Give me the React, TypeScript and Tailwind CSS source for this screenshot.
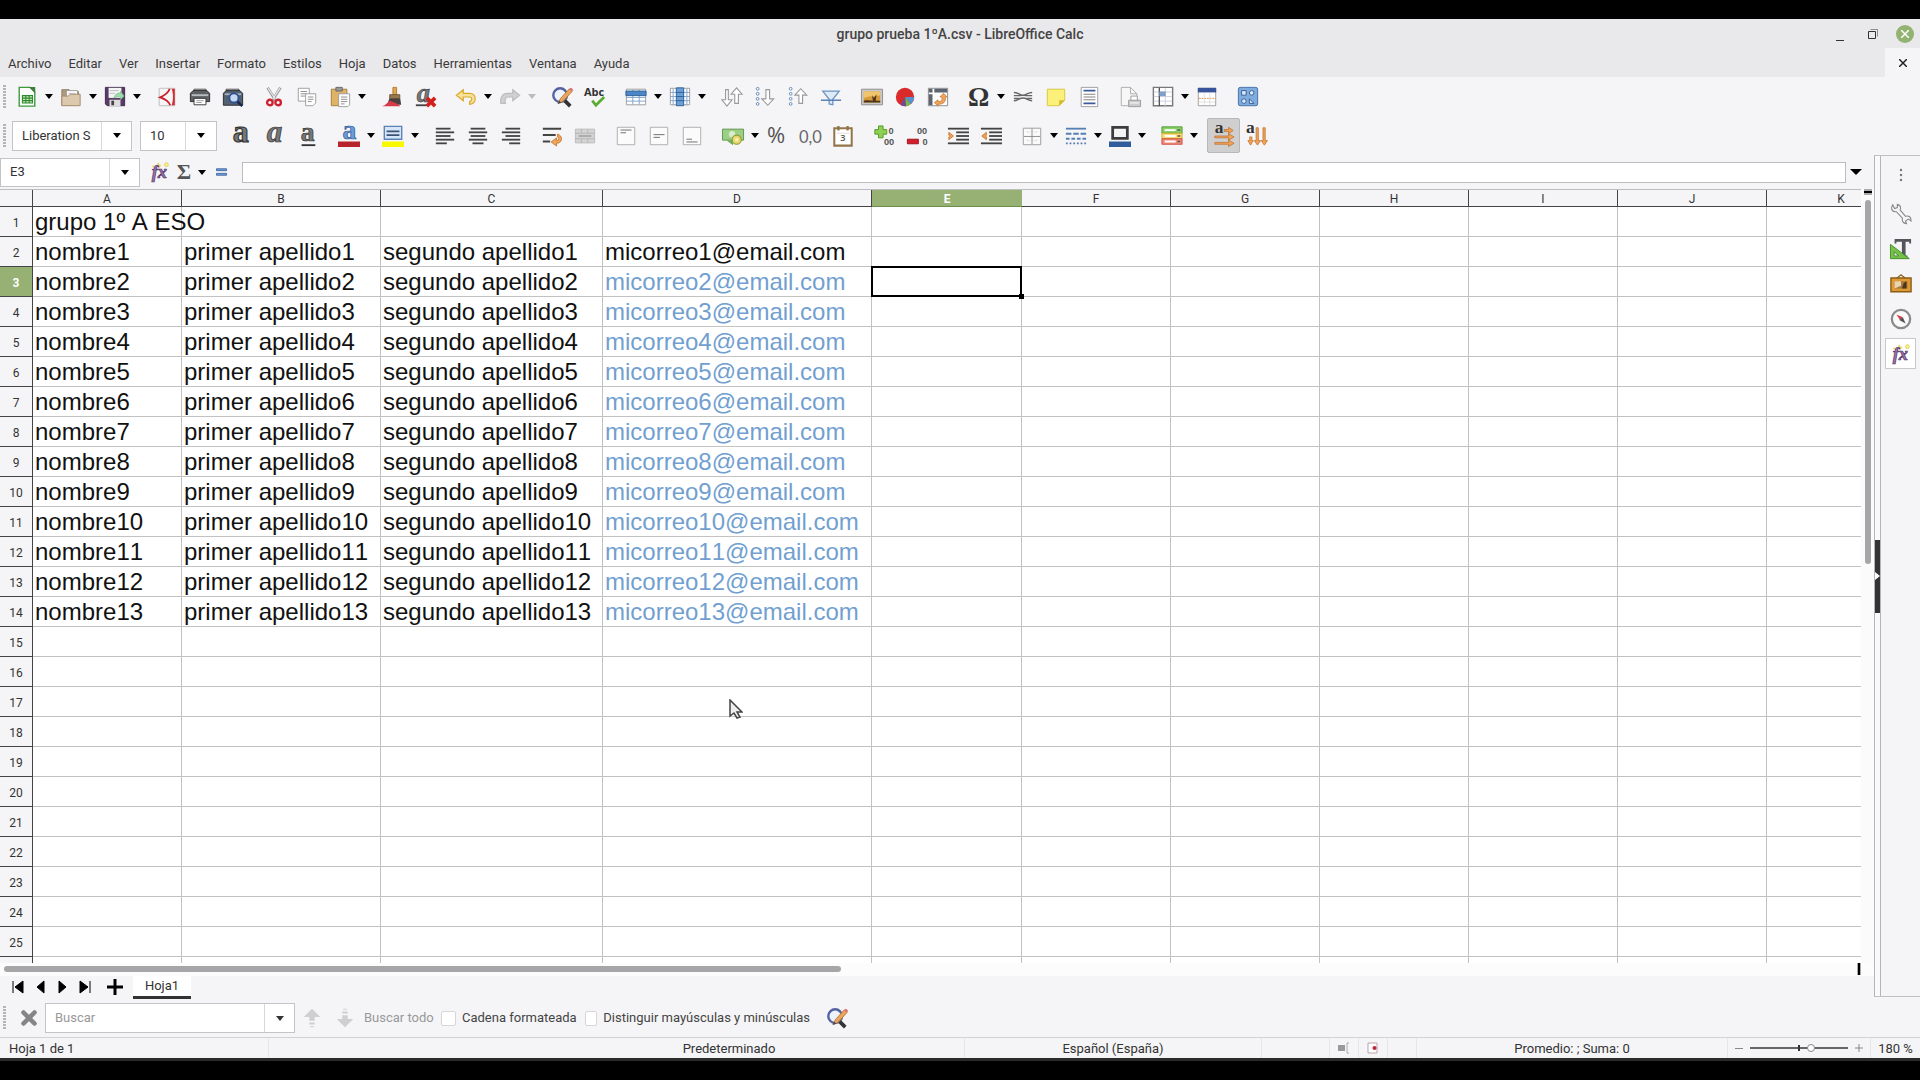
import type { ReactNode } from "react";

const COLUMNS = [
  { id: "A", width: "w-[149px]" },
  { id: "B", width: "w-[199px]" },
  { id: "C", width: "w-[222px]" },
  { id: "D", width: "w-[269px]" },
  { id: "E", width: "w-[150px]" },
  { id: "F", width: "w-[149px]" },
  { id: "G", width: "w-[149px]" },
  { id: "H", width: "w-[149px]" },
  { id: "I", width: "w-[149px]" },
  { id: "J", width: "w-[149px]" },
  { id: "K", width: "w-[149px]" },
];

const ROW_COUNT = 25;

const MENUS = [
  "Archivo", "Editar", "Ver", "Insertar", "Formato", "Estilos",
  "Hoja", "Datos", "Herramientas", "Ventana", "Ayuda",
];

function cellValue(col: string, row: number) {
  if (row === 1) return col === "A" ? "grupo 1º A ESO" : "";
  if (row > 14) return "";
  const n = row - 1;
  switch (col) {
    case "A": return `nombre${n}`;
    case "B": return `primer apellido${n}`;
    case "C": return `segundo apellido${n}`;
    case "D": return `micorreo${n}@email.com`;
    default: return "";
  }
}

const lines = (ys: number[], x1: number, x2: number) =>
  ys.map((y) => <path key={y} d={`M${x1} ${y}H${x2}`} />);

const SERIF = "Liberation Serif, serif";
const SANS = "Open Sans, sans-serif";
const DIGITS = "Liberation Sans, sans-serif";

const ICONS: Record<string, ReactNode> = {
  new: (
    <>
      <path d="M3.5 1.5h12l5 5v15.5h-17z" fill="#fff" stroke="#3c9a3c" strokeWidth="1.5" />
      <path d="M14 1h7v7z" fill="#3f7d3f" />
      <path d="M7 10.5h11v8H7zM7 13.2h11M7 15.9h11M10.7 10.5v8M14.4 10.5v8" fill="#cdeec0" stroke="#2f8a2f" strokeWidth="1.2" />
    </>
  ),
  open: (
    <>
      <path d="M2 4h8l2 2h8v15H2z" fill="#b09a7e" stroke="#8f7b62" />
      <path d="M7 5h12v9H7z" fill="#fff" stroke="#999" />
      <path d="M9 8h8" stroke="#bbb" />
      <path d="M2 11h7l2-2h11v12.5H2z" fill="#dcc8ac" stroke="#a08a6c" />
    </>
  ),
  save: (
    <>
      <path d="M1.5 1.5h21v20h-19l-2-2z" fill="#5a3a66" stroke="#3c2547" />
      <path d="M5 2h14v11H5z" fill="#f4f4f4" />
      <path d="M6 5h10M6 8h6" stroke="#bbb" />
      <path d="M6 15h12v7H6z" fill="#ddd" />
      <path d="M8 16h3v5H8z" fill="#444" />
      <path d="M11 13c1-4 4-6 7-5V6l4 5-4 4v-3c-3-1-5 0-7 1z" fill="#9fdcae" stroke="#69b87c" strokeWidth=".7" />
    </>
  ),
  pdf: (
    <>
      <path d="M3.5 2.5h17v19h-17z" fill="#f8f5f6" stroke="#bbb" />
      <path d="M15 3c-2 5-7 8-10.5 9.5C9 14 14 17 15.5 21" fill="none" stroke="#c8202c" strokeWidth="2" />
      <path d="M17 3h3.5v18H17c2-5 2-13 0-18z" fill="#d12c38" />
    </>
  ),
  print: (
    <>
      <path d="M5.5 3.5h13V9h-13z" fill="#f6f6f6" stroke="#444" />
      <path d="M1.5 8l3-3h15l3 3v9h-21z" fill="#5d6164" stroke="#26292b" />
      <path d="M3 10h18" stroke="#b8bcc0" strokeWidth="2" />
      <path d="M5.500 13.5h13v7h-13z" fill="#fff" stroke="#333" />
      <path d="M8 16h8M8 18h6" stroke="#999" />
    </>
  ),
  preview: (
    <>
      <path d="M4.5 3.5h14V9h-14z" fill="#f0f0f0" stroke="#444" />
      <path d="M1.5 8l3-3h15l3 3v13h-21z" fill="#53606f" stroke="#26292b" />
      <path d="M3 9h18" stroke="#aab2bc" strokeWidth="2" />
      <circle cx="13" cy="13" r="5" fill="#c4d8f0" stroke="#2d4f96" strokeWidth="2" />
      <path d="M17 17l5 5" stroke="#17264e" strokeWidth="2.5" />
    </>
  ),
  cut: (
    <>
      <path d="M5 2l9 14M19 2l-9 14" stroke="#9b9b9b" strokeWidth="3" />
      <path d="M5.5 2.5l8 12M18.5 2.5l-8 12" stroke="#eee" strokeWidth="1.2" />
      <circle cx="7.5" cy="18" r="3" fill="#fff" stroke="#cf2030" strokeWidth="2.6" />
      <circle cx="16.5" cy="18" r="3" fill="#fff" stroke="#cf2030" strokeWidth="2.6" />
    </>
  ),
  copy: (
    <>
      <path d="M2.5 2.5h12v14h-12z" fill="#fff" stroke="#999" />
      <path d="M5 6h7M5 8.5h7M5 11h5" stroke="#888" />
      <path d="M10.5 8.5h11v10l-3 3h-8z" fill="#fff" stroke="#999" />
      <path d="M13 12h6M13 14.5h6M13 17h4" stroke="#888" />
    </>
  ),
  paste: (
    <>
      <path d="M2.5 3.5h17v18h-17z" fill="#e0b265" stroke="#a47b38" />
      <path d="M7.5 1.5h7v4h-7z" fill="#999" stroke="#666" />
      <path d="M10.5 8.5h12v12l-2 2h-10z" fill="#fff" stroke="#999" />
      <path d="M13 12h7M13 14.5h7M13 17h7M13 19.5h4" stroke="#888" />
    </>
  ),
  brush: (
    <>
      <path d="M13 1.5h4v8h-4z" fill="#e3a54e" stroke="#b47a29" />
      <path d="M9.5 9.5h11v4h-11z" fill="#9a7a50" stroke="#6b5130" />
      <path d="M9 13.5h12l1 7H7z" fill="#4a4040" />
      <path d="M1 22c5-1 6-5 9-6 3 2 8 2 11 6z" fill="#d8394a" />
    </>
  ),
  clear: (
    <>
      <text x="3" y="17" fontFamily={SERIF} fontWeight="700" fontStyle="italic" fontSize="29" fill="#777" stroke="#333" strokeWidth=".6">a</text>
      <path d="M2 21h12" stroke="#444" strokeWidth="2" />
      <path d="M14 13l9 9M23 13l-9 9" stroke="#d41f1f" strokeWidth="4" />
    </>
  ),
  undo: <path d="M9 4L1.5 10 9 16v-4h7c3 0 3 4 0 5v3c8-1 8-12 0-12H9z" fill="#f8e29a" stroke="#d9a92c" strokeWidth="1.3" />,
  redo: <path d="M15 4l7.500 6L15 16v-4h-5c-3 0-4 3-3 7H2C1 12 4 8 9 8h6z" fill="#d0d0d0" stroke="#bdbdbd" strokeWidth="1.3" />,
  find: (
    <>
      <circle cx="10" cy="10" r="7.5" fill="#eef2fb" stroke="#5362a0" strokeWidth="2.6" />
      <path d="M15 16l6 6" stroke="#333" strokeWidth="4" />
      <path d="M8 19l2-5L20 3l3 3-10 11z" fill="#eaa35a" stroke="#b06f2c" strokeWidth=".8" />
      <path d="M20 3l3 3 1-2-2-2z" fill="#e06070" />
      <path d="M7 20l2-4 2 2z" fill="#444" />
    </>
  ),
  spell: (
    <>
      <text x="0" y="11" fontFamily={SANS} fontWeight="700" fontSize="12" fill="#333">Abc</text>
      <path d="M9 16l4 5 9-9" fill="none" stroke="#5cab33" strokeWidth="3" />
    </>
  ),
  rows: (
    <>
      <path d="M1.5 3.5h21v17h-21z" fill="#fff" stroke="#999" />
      <path d="M1.5 16.5h21M1.5 12.5h21M8.5 4v16M15.5 4v16" stroke="#7da2cc" />
      <path d="M1 5.5h22v5H1z" fill="#4b87c8" stroke="#2d5c93" />
    </>
  ),
  cols: (
    <>
      <path d="M1.5 2.5h21v18h-21z" fill="#fff" stroke="#999" />
      <path d="M1.5 7h21M1.5 11.5h21M1.5 16h21M4.5 3v18M19.5 3v18" stroke="#7da2cc" />
      <path d="M8 2h8v19.500H8z" fill="#6a9fd8" stroke="#2d5c93" />
      <path d="M8 7h8M8 11.500h8M8 16h8" stroke="#2d5c93" />
    </>
  ),
  sort: (
    <g fill="#fff" stroke="#999" strokeWidth="1.2">
      <path d="M5 4h3v11h4l-5.500 7L1 15h4z" />
      <path d="M15 19h4V9h4l-6-7-6 7h4z" />
    </g>
  ),
  sortAsc: (
    <>
      <g fill="#fff" stroke="#5d83b5">
        {[3, 8.5, 14, 19.5].map((y) => <circle key={y} cx="4" cy={y} r="1.5" />)}
      </g>
      <path d="M13 4h4v10h4.500l-6.500 7-6.500-7H13z" fill="#fff" stroke="#999" strokeWidth="1.2" />
    </>
  ),
  sortDesc: (
    <>
      <g fill="#fff" stroke="#5d83b5">
        {[3, 8.5, 14, 19.5].map((y) => <circle key={y} cx="4" cy={y} r="1.5" />)}
      </g>
      <path d="M13 19h4V10h4.500L15 3l-6.500 7H13z" fill="#fff" stroke="#999" strokeWidth="1.2" />
    </>
  ),
  filter: (
    <>
      <path d="M3 5.5h18l-7 9v6l-4-1v-5z" fill="#dce9f7" stroke="#6d93c1" strokeWidth="1.4" />
      <path d="M1 15.500h22" stroke="#4b78ad" strokeWidth="1.5" />
    </>
  ),
  image: (
    <>
      <path d="M.5 3.5h23v17H.5z" fill="#c9c9c9" stroke="#8a8a8a" />
      <path d="M3 6h18v12H3z" fill="#d79a3c" />
      <path d="M3 6h18v4c-6 2-12 0-18 3z" fill="#f0c66c" />
      <path d="M3 18v-2c4-1 6 0 10 0l-1-6 2 3 3-4-1 7 5 0v2z" fill="#4d351a" />
    </>
  ),
  chart: (
    <>
      <circle cx="12" cy="12" r="10" fill="#da2b2b" />
      <path d="M12 12h10a10 10 0 0 1-4 8z" fill="#5c8fd0" />
      <path d="M12 12l6 8a10 10 0 0 1-5 2z" fill="#6fbf4a" />
      <path d="M12 12l1 10a10 10 0 0 1-6-1.500z" fill="#704a9a" />
    </>
  ),
  pivot: (
    <>
      <path d="M1.5 2.5h21v19h-21z" fill="#fff" stroke="#888" />
      <path d="M2 3h4v4H2zM8 3h14v4H8zM2 9h4v12H2z" fill="#5d6470" />
      <path d="M8 18l4-3v2c4 0 5-2 4-5h-2l4-4 4 4h-2c1 5-2 8-8 8v2z" fill="#f0a35c" stroke="#bd6a1f" strokeWidth=".7" />
    </>
  ),
  omega: <text x="0" y="22" fontFamily={SERIF} fontWeight="700" fontSize="29" fill="#333">Ω</text>,
  link: (
    <g fill="none" stroke="#666" strokeWidth="1.6">
      <path d="M2 7c5 0 6 3 10 3s5-3 10-3M2 16c5 0 6-3 10-3s5 3 10 3M2 10.5h8M14 10.5h8M2 13.5h6M16 13.5h6" />
    </g>
  ),
  note: (
    <>
      <path d="M2.5 3.5h19v12l-6 6h-13z" fill="#fbf07a" stroke="#d8c53a" />
      <path d="M21.5 15.5h-6v6z" fill="#d5b92a" />
    </>
  ),
  header: (
    <>
      <path d="M3.5 1.5h18v21h-18z" fill="#fff" stroke="#999" />
      <path d="M6 5h13M6 19h13" stroke="#3c5a9a" strokeWidth="2" />
      <path d="M6 9h13M6 12h13M6 15h13" stroke="#777" />
    </>
  ),
  printArea: (
    <>
      <path d="M2.5 1.5h10l7 7v13h-17z" fill="#f7f7f7" stroke="#aaa" />
      <path d="M12.5 1.5v7h7" fill="none" stroke="#aaa" />
      <path d="M13 11h7v5h-7z" fill="#fff" stroke="#999" />
      <path d="M10.500 15.500h13v7h-13z" fill="#ccc" stroke="#999" />
      <path d="M12 18.5h10" stroke="#fff" />
    </>
  ),
  freeze: (
    <>
      <path d="M1.5 1.5h21v20h-21z" fill="#fff" stroke="#777" strokeWidth="1.5" />
      <path d="M2 6.5h20M2 11.5h20M2 16.5h20M14.5 2v20" stroke="#ccd" />
      <path d="M8 2v20" stroke="#555" strokeWidth="1.5" />
      <path d="M8 6h7v5H8z" fill="#7fa0c8" />
    </>
  ),
  windowSplit: (
    <>
      <path d="M2.5 2.5h19v19h-19z" fill="#fff" stroke="#999" />
      <path d="M2 2h20v5H2z" fill="#39539a" />
      <path d="M3 13.5h18" stroke="#e08b3c" strokeDasharray="2 1" />
      <path d="M9 8v13M15 8v13M3 17.5h18" stroke="#ddd" />
    </>
  ),
  draw: (
    <>
      <rect x="1.5" y="1.5" width="21" height="20" rx="2" fill="#7fabdd" stroke="#3f6ca5" />
      <g fill="#dceafa" stroke="#2f5b96">
        <path d="M5 5h5v5H5zM13.5 19v-5l5 5z" />
        <circle cx="16" cy="7.5" r="2.5" />
        <circle cx="7.5" cy="16.5" r="2.5" />
      </g>
    </>
  ),
  bold: <text x="2" y="19" fontFamily={SERIF} fontWeight="700" fontSize="35" fill="#777" stroke="#333" strokeWidth="1.2">a</text>,
  italic: <text x="3" y="19" fontFamily={SERIF} fontWeight="700" fontStyle="italic" fontSize="34" fill="#777" stroke="#333" strokeWidth=".8">a</text>,
  underline: (
    <>
      <text x="4" y="17" fontFamily={SERIF} fontWeight="700" fontSize="30" fill="#777" stroke="#333" strokeWidth=".8">a</text>
      <path d="M5 22h15" stroke="#333" strokeWidth="2" />
    </>
  ),
  fontColor: (
    <>
      <text x="5" y="15" fontFamily={SERIF} fontWeight="700" fontSize="30" fill="#6c9bd8" stroke="#2f5b96" strokeWidth=".8">a</text>
      <path d="M0 18h24v6H0z" fill="#b8242c" />
    </>
  ),
  highlight: (
    <>
      <path d="M2.5 1.500h19v14h-19z" fill="#d6e5f7" stroke="#5c82b3" strokeWidth="1.5" />
      <path d="M5 7h14M5 11h14" stroke="#3b5275" strokeWidth="2" />
      <path d="M0 18h24v6H0z" fill="#f8f800" />
    </>
  ),
  alignLeft: <g stroke="#444" strokeWidth="2">{lines([4, 12], 2, 18)}{lines([8, 16], 2, 22)}{lines([20], 2, 14)}</g>,
  alignCenter: <g stroke="#444" strokeWidth="2">{lines([4, 12], 4, 20)}{lines([8, 16], 2, 22)}{lines([20], 6, 18)}</g>,
  alignRight: <g stroke="#444" strokeWidth="2">{lines([4, 12], 6, 22)}{lines([8, 16], 2, 22)}{lines([20], 10, 22)}</g>,
  wrap: (
    <>
      <path d="M2 4h20M2 11h14M2 18h8" stroke="#444" strokeWidth="2.200" />
      <path d="M18 10c6 1 6 10-1 10v3l-6-4.500 6-4.500v3c3 0 3-4 1-4z" fill="#eda45b" stroke="#bd6a1f" strokeWidth=".8" />
    </>
  ),
  merge: (
    <>
      <path d="M1.5 4.5h21v15h-21z" fill="#d4d4d4" stroke="#bbb" />
      <path d="M1.5 9h21M1.5 15h21M8 15v4.5M15 15v4.5M8 4.5V9M15 4.5V9" stroke="#b4b4b4" />
      <path d="M5 12h14" stroke="#999" strokeWidth="1.5" />
    </>
  ),
  top: (
    <>
      <path d="M2.5 2.5h19v19h-19z" fill="#fbfbfb" stroke="#aaa" />
      <path d="M6 5.5h12M6 8.5h6" stroke="#666" />
    </>
  ),
  middle: (
    <>
      <path d="M2.5 2.5h19v19h-19z" fill="#fbfbfb" stroke="#aaa" />
      <path d="M6 10.5h12M6 13.5h7" stroke="#666" />
    </>
  ),
  bottom: (
    <>
      <path d="M2.5 2.5h19v19h-19z" fill="#fbfbfb" stroke="#aaa" />
      <path d="M6 15.5h6M6 18.5h12" stroke="#666" />
    </>
  ),
  currency: (
    <>
      <path d="M.5 4.5h23v12H.5z" fill="#9ccf86" stroke="#5c9444" />
      <circle cx="11" cy="10" r="3.5" fill="#d5edc8" />
      <circle cx="16" cy="16" r="5" fill="#e8d56b" stroke="#8c9b39" strokeWidth="1.2" />
      <circle cx="16" cy="16" r="2" fill="#f8efb0" />
      <path d="M5 17l7 5v-5z" fill="#6fae52" />
    </>
  ),
  percent: <text x="1" y="20" fontFamily={SANS} fontSize="24" fill="#555">%</text>,
  number: <text x="0" y="20" fontFamily="Lato, sans-serif" fontSize="18" fill="#666">0,0</text>,
  date: (
    <>
      <path d="M2.5 3.5h19v19h-19z" fill="#fff" stroke="#93754a" strokeWidth="2.2" />
      <path d="M7 1v5M17 1v5" stroke="#93754a" strokeWidth="2.5" />
      <path d="M5 9h14" stroke="#ddd" />
      <text x="9" y="17" fontFamily={SANS} fontSize="10" fontWeight="600" fill="#555">3</text>
    </>
  ),
  addDecimal: (
    <>
      <path d="M6 1h5v4h4v5h-4v4H6v-4H2V5h4z" fill="#8fd052" stroke="#4c9a20" />
      <text x="17" y="10" fontFamily={DIGITS} fontSize="10" fontWeight="700" fill="#555">0</text>
      <text x="12" y="22" fontFamily={DIGITS} fontSize="10" fontWeight="700" fill="#555">00</text>
    </>
  ),
  delDecimal: (
    <>
      <path d="M1.5 15.5h12v5h-12z" fill="#d4202c" stroke="#9c1019" />
      <text x="12" y="10" fontFamily={DIGITS} fontSize="10" fontWeight="700" fill="#555">00</text>
      <text x="18" y="22" fontFamily={DIGITS} fontSize="10" fontWeight="700" fill="#555">0</text>
    </>
  ),
  indent: (
    <>
      <g stroke="#444" strokeWidth="2">{lines([4, 20], 1, 24)}{lines([8, 12, 16], 10, 24)}</g>
      <path d="M2 8l5 4-5 4v-3l1-1-1-1z" fill="#f0a05a" stroke="#d07a2c" />
    </>
  ),
  outdent: (
    <>
      <g stroke="#444" strokeWidth="2">{lines([4, 20], 1, 24)}{lines([8, 12, 16], 10, 24)}</g>
      <path d="M7 8l-5 4 5 4v-3l-1-1 1-1z" fill="#f0a05a" stroke="#d07a2c" />
    </>
  ),
  borders: (
    <>
      <path d="M2.5 3.5h19v18h-19z" fill="#fafafa" stroke="#999" />
      <path d="M12 4v17M3 12.5h18" stroke="#888" />
      <path d="M6 7.5h4M14 7.5h4M6 17h4M14 17h4" stroke="#ddd" />
    </>
  ),
  lineStyle: (
    <g stroke="#5680b5" strokeWidth="2">
      <path d="M1 4h22" />
      <path d="M1 9.5h22" strokeDasharray="6 2" />
      <path d="M1 15h22" strokeDasharray="4 2" />
      <path d="M1 20h22" strokeDasharray="2 2" />
    </g>
  ),
  borderColor: (
    <>
      <path d="M4 2.5h16v12H4z" fill="#f4f4f4" stroke="#3c3c3c" strokeWidth="3" />
      <path d="M0 18h24v6H0z" fill="#2f5d9c" />
    </>
  ),
  conditional: (
    <>
      <path d="M1 2h22v7H1z" fill="#8bd06a" stroke="#4c9a2c" />
      <path d="M1 9h22v6H1z" fill="#f6dd72" stroke="#cfae2e" />
      <path d="M1 15h22v6H1z" fill="#f08c7c" stroke="#d14a3c" />
      <path d="M4 5.5h12M4 12h12M4 18h12" stroke="#fff" strokeWidth="2" />
      <path d="M18 5.5h3M18 12h3M18 18h3" stroke="#555" strokeWidth="1.5" />
    </>
  ),
  ltr: (
    <>
      <text x="2" y="9" fontFamily={SERIF} fontWeight="700" fontSize="19" fill="#333">a</text>
      <g fill="#f0a35c" stroke="#b9651b" strokeWidth=".7">
        <path d="M12 5h5V2.500l5 3.500-5 3.500V7h-5zM2 12h15V9.500l6 3.500-6 3.500V14H2zM2 19h15v-2.500l6 3.500-6 3.500V21H2z" />
      </g>
    </>
  ),
  ttb: (
    <>
      <text x="0" y="9" fontFamily={SERIF} fontWeight="700" fontSize="19" fill="#333">a</text>
      <g fill="#f0a35c" stroke="#b9651b" strokeWidth=".7">
        <path d="M4 13h2.500v4H8l-3 5-3-5h2zM11 3h2.500v14H16l-3.500 5L9 17h2zM18.500 3H21v14h2.500L20 22l-3.500-5h2z" />
      </g>
    </>
  ),
  fx: (
    <>
      <text x="3" y="19" fontFamily={SERIF} fontWeight="700" fontStyle="italic" fontSize="20" fill="#9a76ab" stroke="#57356b" strokeWidth=".8">fx</text>
      <path d="M4 5l1 2M10 2v2" stroke="#e7d64f" strokeWidth="1.5" />
      <circle cx="19" cy="4" r="2" fill="#fbf3a0" stroke="#e0cc3c" />
      <circle cx="12" cy="5" r="1.3" fill="#f2df55" />
    </>
  ),
  sigma: <text x="4" y="20" fontFamily={SERIF} fontWeight="700" fontSize="24" fill="#555">Σ</text>,
  equals: <path d="M6 8.5h11v2H6zM6 13.5h11v2H6z" fill="#7ba4d8" stroke="#3c67a5" />,
  wrench: <path d="M3 2l2 4 3-1V1.500c4 1 4 4 3 6l6 7c3-1 6 0 6 5l-3-2-3 2 1 3c-4 0-5-3-4.500-6L7 9.500C3 10 0 7 3 2z" fill="#f4f4f4" stroke="#888" strokeWidth="1.2" />,
  styles: (
    <>
      <path d="M5 1h18v5h-2V4h-4v15h2v2h-8v-2h2V4H7v2H5z" fill="#54565c" />
      <path d="M.5 7v15.500H21z" fill="#77c04c" stroke="#3f8a22" />
      <path d="M4.500 15v4.500h5z" fill="#f4f4f4" stroke="#3f8a22" />
    </>
  ),
  gallery: (
    <>
      <path d="M7 6l5-4 5 4" fill="none" stroke="#8a6424" strokeWidth="1.5" />
      <path d="M1 5.500h22v15H1z" fill="#e09a34" stroke="#8a5c14" strokeWidth="1.5" />
      <path d="M5 9h14v8H5z" fill="#a8793c" />
      <path d="M5 9h7v5l-7 3z" fill="#e8d6b0" />
      <path d="M13 17l2-6 3-2v8z" fill="#4d351a" />
    </>
  ),
  compass: (
    <>
      <circle cx="12" cy="12" r="10" fill="#fafafa" stroke="#8a8a8a" strokeWidth="2.5" />
      <path d="M7 7l7 3-3 3z" fill="#d63d4a" />
      <path d="M17 17l-7-4 4-3z" fill="#555" />
    </>
  ),
  closeFind: <path d="M6 6l12 12M18 6L6 18" stroke="#858585" strokeWidth="5" strokeLinecap="round" />,
  findUp: <path d="M12 2l9 9h-6v4h-6v-4H3zM9 17h6v2H9zM10 21h4v1h-4z" fill="#cfcfcf" />,
  findDown: <path d="M12 22l9-9h-6V9H9v4H3zM9 5h6v2H9zM10 2h4v1h-4z" fill="#cfcfcf" />,
};

function Icon({ name }: { name: string }) {
  return (
    <svg viewBox="0 0 24 24" className="size-[22px] shrink-0 overflow-visible" fill="none" aria-hidden="true">
      {ICONS[name]}
    </svg>
  );
}

function Caret({ className = "text-black" }: { className?: string }) {
  return (
    <svg viewBox="0 0 8 5" className={`h-[5px] w-2 shrink-0 ${className}`} aria-hidden="true">
      <path d="M0 0h8L4 5z" fill="currentColor" />
    </svg>
  );
}

// "name" is a plain button, "name+" has a drop-down arrow, "|" is a group gap
const STANDARD = [
  "new+", "open+", "save+", "|", "pdf", "print", "preview", "|", "cut", "copy", "paste+", "|",
  "brush", "clear", "|", "undo+", "redo+", "|", "find", "spell", "|", "rows+", "cols+", "|",
  "sort", "sortAsc", "sortDesc", "filter", "|", "image", "chart", "pivot", "|", "omega+", "link",
  "note", "header", "|", "printArea", "freeze+", "windowSplit", "|", "draw",
];

const FORMATTING = [
  "bold", "italic", "underline", "|", "fontColor+", "highlight+", "|", "alignLeft", "alignCenter",
  "alignRight", "|", "wrap", "merge", "|", "top", "middle", "bottom", "|", "currency+", "percent",
  "number", "date", "|", "addDecimal", "delDecimal", "|", "indent", "outdent", "|", "borders+",
  "lineStyle+", "borderColor+", "|", "conditional+", "|", "ltr", "ttb",
];

function ToolItems({ items }: { items: string[] }) {
  return (
    <>
      {items.map((item, i) => {
        if (item === "|") return <span key={i} className="w-2 shrink-0" />;
        const name = item.replace("+", "");
        return (
          <span key={i} className="flex shrink-0 items-center">
            <button
              type="button"
              aria-label={name}
              className={`flex h-[35px] w-[33px] items-center justify-center rounded-xs ${name === "ltr" ? "border border-[#b8b8b8] bg-[#cfcfcf]" : ""}`}
            >
              <Icon name={name} />
            </button>
            {item.endsWith("+") && (
              <button type="button" aria-label={`${name} opciones`} className="flex h-[35px] w-[11px] items-center justify-center">
                <Caret className={name === "redo" ? "text-[#bbb]" : "text-black"} />
              </button>
            )}
          </span>
        );
      })}
    </>
  );
}

function Grip() {
  return <span className="ml-[3px] h-6 w-[3px] shrink-0 bg-[repeating-linear-gradient(#b5b5b5_0_2px,transparent_2px_3px)]" />;
}

function TitleBar() {
  return (
    <header className="grid h-[29px] grid-cols-[1fr_auto_1fr] items-center bg-[#e9e8ea]">
      <h1 className="col-start-2 pt-0.5 text-[14px] font-medium text-[#444]">grupo prueba 1ºA.csv - LibreOffice Calc</h1>
      <div className="flex items-center justify-end gap-[13px] pr-[6px]">
        <button type="button" aria-label="Minimizar" className="flex size-5 items-end justify-center pb-[3px]">
          <span className="h-px w-2 bg-[#333]" />
        </button>
        <button type="button" aria-label="Restaurar" className="flex size-5 items-center justify-center">
          <svg viewBox="0 0 12 12" className="size-3" fill="none" stroke="#333">
            <path d="M1.5 3.5h7v7h-7z" />
            <path d="M3.5 1.5h7v7" strokeOpacity=".5" />
          </svg>
        </button>
        <button type="button" aria-label="Cerrar" className="flex size-[18px] items-center justify-center rounded-full bg-[#92b372]">
          <svg viewBox="0 0 8 8" className="size-2" stroke="#fff" strokeWidth="1.5">
            <path d="M0 0l8 8M8 0L0 8" />
          </svg>
        </button>
      </div>
    </header>
  );
}

function MenuBar() {
  return (
    <nav className="flex h-[29px] items-stretch gap-px bg-[#e9e8ea] text-[13px] text-[#3a3a3a]">
      {MENUS.map((menu) => (
        <button key={menu} type="button" className="px-2 pt-0.5">{menu}</button>
      ))}
      <button type="button" aria-label="Cerrar documento" className="ml-auto flex w-[35px] items-center justify-center bg-[#f5f5f7]">
        <svg viewBox="0 0 8 8" className="size-2" stroke="#222" strokeWidth="1.5">
          <path d="M0 0l8 8M8 0L0 8" />
        </svg>
      </button>
    </nav>
  );
}

function Toolbars() {
  return (
    <div className="bg-[#f5f5f7]">
      <div className="flex h-[39px] items-center">
        <Grip />
        <span className="w-1 shrink-0" />
        <ToolItems items={STANDARD} />
      </div>
      <div className="flex h-[39px] items-center">
        <Grip />
        <div className="ml-[6px] flex h-[30px] w-[120px] shrink-0 border border-[#c4c4c6] bg-white">
          <select aria-label="Nombre del tipo de letra" className="w-[88px] appearance-none pl-[9px] text-[13px] text-[#333]">
            <option>Liberation S</option>
          </select>
          <span className="flex flex-1 items-center justify-center border-l border-[#d8d8da]"><Caret /></span>
        </div>
        <div className="ml-2 flex h-[30px] w-[77px] shrink-0 border border-[#c4c4c6] bg-white">
          <select aria-label="Tamaño de letra" className="w-11 appearance-none pl-[9px] text-[13px] text-[#333]">
            <option>10</option>
          </select>
          <span className="flex flex-1 items-center justify-center border-l border-[#d8d8da]"><Caret /></span>
        </div>
        <span className="w-2 shrink-0" />
        <ToolItems items={FORMATTING} />
      </div>
    </div>
  );
}

function FormulaBar() {
  return (
    <div className="flex h-[34px] items-center bg-[#f5f5f7]">
      <div className="flex h-[29px] w-[140px] shrink-0 border border-[#c4c4c6] bg-white">
        <input aria-label="Cuadro de nombre" defaultValue="E3" className="w-[108px] pl-[9px] text-[13px] text-[#333]" />
        <button type="button" aria-label="Lista de nombres" className="flex flex-1 items-center justify-center border-l border-[#d8d8da]"><Caret /></button>
      </div>
      <button type="button" aria-label="Asistente de funciones" className="ml-2 flex w-6 justify-center"><Icon name="fx" /></button>
      <button type="button" aria-label="Seleccionar función" className="flex w-6 justify-center"><Icon name="sigma" /></button>
      <button type="button" aria-label="Funciones" className="flex w-3 justify-center"><Caret /></button>
      <button type="button" aria-label="Fórmula" className="flex w-7 justify-center"><Icon name="equals" /></button>
      <input aria-label="Línea de entrada" className="ml-[6px] h-[21px] min-w-0 flex-1 border border-[#bdbdbf] bg-white px-1 text-[13px]" />
      <button type="button" aria-label="Expandir barra de fórmulas" className="flex w-7 justify-center pr-2">
        <svg viewBox="0 0 12 6" className="h-[6px] w-3 shrink-0"><path d="M0 0h12L6 6z" /></svg>
      </button>
    </div>
  );
}

function Sheet() {
  const rows = Array.from({ length: ROW_COUNT }, (_, i) => i + 1);
  return (
    <div className="flex bg-white">
      <div className="min-w-0 flex-1 overflow-hidden border-t border-[#bdbdbf]">
        <table className="w-[1882px] table-fixed border-separate border-spacing-0">
          <thead>
            <tr className="h-[17px] text-[12px] leading-[14px] text-[#333]">
              <th aria-label="Seleccionar todo" className="w-[33px] border-r border-b border-[#444] bg-[#f5f5f7] p-0" />
              {COLUMNS.map(({ id, width }) => (
                <th
                  key={id}
                  scope="col"
                  className={`border-b p-0 pt-0.5 ${width} ${id === "E" ? "border-[#6d8f4a] bg-[#96b173] font-bold text-white" : "border-r border-[#444] bg-[#f5f5f7] font-normal"}`}
                >
                  {id}
                </th>
              ))}
            </tr>
          </thead>
          <tbody>
            {rows.map((row) => (
              <tr key={row} className="h-[30px]">
                <th
                  scope="row"
                  className={`border-r border-b border-[#444] p-0 pt-0.5 text-[12px] leading-4 ${row === 3 ? "bg-[#96b173] font-bold text-white" : "bg-[#f5f5f7] font-normal text-[#333]"}`}
                >
                  {row}
                </th>
                {COLUMNS.map(({ id }) => (
                  <td
                    key={id}
                    className={`relative border-r border-b border-[#c2c2c2] p-0 pl-[2px] font-['Liberation_Sans',Arial,sans-serif] text-[24px] leading-[29px] whitespace-nowrap [font-kerning:none] ${id === "D" && row > 2 ? "text-[#729fcf]" : "text-[#111]"}`}
                  >
                    {cellValue(id, row)}
                    {id === "E" && row === 3 && (
                      <span className="absolute -inset-px z-10 border-2 border-black">
                        <span className="absolute -right-1 -bottom-1 size-[5px] bg-black" />
                      </span>
                    )}
                  </td>
                ))}
              </tr>
            ))}
            <tr className="h-[6px]">
              <th aria-label="26" className="border-r border-[#444] bg-[#f5f5f7] p-0" />
              {COLUMNS.map(({ id }) => <td key={id} className="border-r border-[#c2c2c2] p-0" />)}
            </tr>
          </tbody>
        </table>
      </div>
      <div className="flex w-[13px] shrink-0 flex-col items-center bg-[#fbfbfc]">
        <span className="h-[6px] w-2 border-y-2 border-[#aaa] bg-black" />
        <span className="mt-[5px] h-[364px] w-[6px] rounded-full bg-[#a6a6a8]" />
      </div>
    </div>
  );
}

function SheetTabs() {
  return (
    <div>
      <div className="flex h-[13px] items-center bg-[#fcfcfd] pb-px pl-1">
        <span className="h-[6px] w-[837px] rounded-full bg-[#a6a6a8]" />
        <span className="mr-[13px] ml-auto h-3 w-1 border-x border-[#aaa] bg-black" />
      </div>
      <div className="flex h-[25px] items-start bg-[#f5f5f7]">
        <div className="flex h-[23px] items-center pb-px pl-[7px]">
          {[
            ["Primera hoja", "M2 1v12M12 1v12L4 7z"],
            ["Hoja anterior", "M11 1v12L4 7z"],
            ["Hoja siguiente", "M4 1v12l7-6z"],
            ["Última hoja", "M3 1v12l8-6zM13 1v12"],
          ].map(([label, d]) => (
            <button key={label} type="button" aria-label={label} className="flex w-[22px] justify-center">
              <svg viewBox="0 0 14 14" className="size-[14px]" stroke="#000" strokeWidth="1"><path d={d} /></svg>
            </button>
          ))}
          <button type="button" aria-label="Añadir hoja" className="ml-[9px] flex w-[22px] justify-center">
            <svg viewBox="0 0 16 16" className="size-4" stroke="#000" strokeWidth="3"><path d="M8 0v16M0 8h16" /></svg>
          </button>
        </div>
        <button type="button" className="ml-[7px] h-[23px] w-[58px] border-b-3 border-[#333] bg-white text-[13px] leading-5 text-[#333]">Hoja1</button>
      </div>
    </div>
  );
}

function Sidebar() {
  return (
    <aside className="mb-1 flex w-[46px] shrink-0 border-y border-[#c0c0c2]">
      <div className="flex w-[7px] items-center border-x border-[#b5b5b7] bg-[#f9f9fa]">
        <button type="button" aria-label="Ocultar barra lateral" className="flex h-[73px] w-full items-center justify-center bg-[#333]">
          <svg viewBox="0 0 5 8" className="h-2 w-[5px] shrink-0" fill="#fff"><path d="M0 0l5 4-5 4z" /></svg>
        </button>
      </div>
      <div className="flex flex-1 flex-col items-center bg-[#f5f5f7] pt-[7px]">
        <button type="button" aria-label="Configuración de la barra lateral" className="mb-[11px] flex h-6 w-[30px] items-center justify-center">
          <svg viewBox="0 0 4 14" className="h-[14px] w-1" fill="#777">
            <circle cx="2" cy="2" r="1.2" /><circle cx="2" cy="7" r="1.2" /><circle cx="2" cy="12" r="1.2" />
          </svg>
        </button>
        {["wrench", "styles", "gallery", "compass", "fx"].map((name) => (
          <button
            key={name}
            type="button"
            aria-label={name}
            className={`mb-1 flex h-[31px] w-[31px] items-center justify-center ${name === "fx" ? "border border-[#c9c9cb] bg-white" : ""}`}
          >
            <Icon name={name} />
          </button>
        ))}
      </div>
    </aside>
  );
}

function FindBar() {
  return (
    <div className="flex h-9 items-center bg-[#f5f5f7] pb-0.5 text-[13px] text-[#444]">
      <Grip />
      <button type="button" aria-label="Cerrar búsqueda" className="ml-3 flex w-[22px] justify-center"><Icon name="closeFind" /></button>
      <div className="ml-[5px] flex h-[30px] w-[250px] border border-[#c4c4c6] bg-white">
        <input aria-label="Buscar" placeholder="Buscar" className="w-[218px] pl-[9px] placeholder:text-[#999]" />
        <button type="button" aria-label="Historial de búsqueda" className="flex flex-1 items-center justify-center border-l border-[#d8d8da]"><Caret className="text-[#333]" /></button>
      </div>
      <button type="button" aria-label="Buscar anterior" className="ml-[6px] flex w-[22px] justify-center"><Icon name="findUp" /></button>
      <button type="button" aria-label="Buscar siguiente" className="ml-[11px] flex w-[22px] justify-center"><Icon name="findDown" /></button>
      <button type="button" className="ml-2 w-[68px] text-left whitespace-nowrap text-[#999]">Buscar todo</button>
      <label className="ml-[9px] flex w-[137px] items-center gap-[6px] whitespace-nowrap">
        <input type="checkbox" className="size-[15px] appearance-none rounded-xs border border-[#d6d6d8] bg-white" />
        Cadena formateada
      </label>
      <label className="ml-[7px] flex w-[225px] items-center gap-[6px] whitespace-nowrap">
        <input type="checkbox" className="size-[15px] appearance-none rounded-xs border border-[#d6d6d8] bg-white" />
        Distinguir mayúsculas y minúsculas
      </label>
      <button type="button" aria-label="Buscar y reemplazar" className="ml-4"><Icon name="find" /></button>
    </div>
  );
}

function StatusBar() {
  return (
    <footer className="flex h-[21px] items-stretch border-t border-[#d2d2d4] bg-[#f5f5f7] text-[13px] leading-[22px] text-[#333] *:border-[#e6e6e8]">
      <span className="w-[14%] border-r pl-[9px]">Hoja 1 de 1</span>
      <span className="ml-auto w-[471px] border-r text-center">Predeterminado</span>
      <span className="w-[297px] border-r text-center">Español (España)</span>
      <span className="w-[68px] border-r" />
      <span className="flex w-[29px] items-center justify-center border-r">
        <svg viewBox="0 0 12 12" className="size-3"><path d="M0 3h7v6H0z" fill="#999" /><path d="M11 1H9v10h2" fill="none" stroke="#aaa" /></svg>
      </span>
      <span className="flex w-[29px] items-center justify-center border-r">
        <svg viewBox="0 0 12 12" className="size-3"><path d="M1 1h9v10H1z" fill="#fff" stroke="#b9a5a9" /><circle cx="7.5" cy="6" r="2" fill="#c0283a" /></svg>
      </span>
      <span className="w-[29px] border-r" />
      <span className="w-[311px] border-r text-center">Promedio: ; Suma: 0</span>
      <span className="flex w-[143px] items-center justify-center gap-[7px] border-r text-[#777]">
        <button type="button" aria-label="Reducir" className="flex w-2 justify-center"><span className="h-px w-2 bg-[#888]" /></button>
        <input
          type="range"
          aria-label="Escala"
          min={0}
          max={100}
          defaultValue={63}
          className="h-2 w-[98px] appearance-none bg-[linear-gradient(#333,#333),linear-gradient(#666,#666)] bg-[length:2px_6px,100%_2px] bg-center bg-no-repeat [&::-webkit-slider-thumb]:size-2 [&::-webkit-slider-thumb]:appearance-none [&::-webkit-slider-thumb]:rounded-full [&::-webkit-slider-thumb]:border [&::-webkit-slider-thumb]:border-[#888] [&::-webkit-slider-thumb]:bg-white"
        />
        <button type="button" aria-label="Ampliar" className="flex w-2 justify-center">
          <svg viewBox="0 0 8 8" className="size-2" stroke="#888"><path d="M4 0v8M0 4h8" /></svg>
        </button>
      </span>
      <span className="w-[49px] text-center">180 %</span>
    </footer>
  );
}

export default function App() {
  return (
    <div className="relative flex min-h-screen flex-col bg-black pt-[19px] font-[Roboto,'Open_Sans',sans-serif]">
      <TitleBar />
      <MenuBar />
      <Toolbars />
      <div className="flex bg-[#f5f5f7]">
        <div className="min-w-0 flex-1">
          <FormulaBar />
          <Sheet />
          <SheetTabs />
        </div>
        <Sidebar />
      </div>
      <FindBar />
      <StatusBar />
      <div className="h-[3px] bg-[#2b2b2b]" />

      {/* mouse pointer */}
      <svg viewBox="0 0 14 20" className="pointer-events-none absolute top-[699px] left-[729px] h-5 w-[14px]">
        <path d="M1 1v16l4-3 3 5 3-1-3-5h5z" fill="#eee" stroke="#444" strokeWidth="1.5" />
      </svg>
    </div>
  );
}
